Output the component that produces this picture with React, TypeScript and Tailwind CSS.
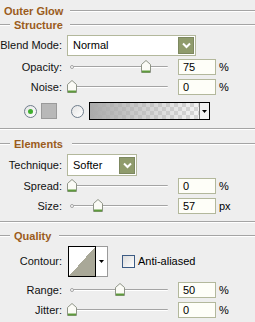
import React from "react"

const font = "font-['Liberation_Sans',Arial,sans-serif]"

const Thumb = ({ x }: { x: number }) => (
  <svg width="10" height="13" viewBox="0 0 10 13" className="absolute top-[-1px]" style={{ left: x }}>
    <path d="M0.5 4.5 L5 0.5 L9.5 4.5 L9.5 12.5 L0.5 12.5 Z" fill="#fbfbf6" stroke="#8e9486" />
    <path d="M1 11.5 L9 11.5" stroke="#5e9a3c" strokeWidth="2" />
  </svg>
)

const Slider = ({ pos }: { pos: number }) => (
  <div className="relative ml-[5px] h-[12px] w-[106px]">
    <div className="absolute left-[4px] top-[5px] h-[2px] w-[97px] rounded-full border-t border-[#a4a4a4] bg-white" />
    <div className="absolute left-[3px] top-[4px] h-[4px] w-[4px] rounded-full border border-[#a4a4a4] bg-white" />
    <Thumb x={pos - 67 - 5} />
  </div>
)

const Input = ({ value }: { value: string }) => (
  <div className="h-[16px] w-[38px] border border-[#b3b89c] bg-[#fefef8] pl-[4px] text-[11px] leading-[14px] text-black">{value}</div>
)

const SliderRow = ({ label, pos, value, unit, mt }: { label: string; pos: number; value: string; unit: string; mt: string }) => (
  <div className={`flex h-[16px] items-center ${mt}`}>
    <div className="w-[62px] text-right text-[11px] text-[#111]">{label}</div>
    <Slider pos={pos} />
    <div className="ml-[5px]"><Input value={value} /></div>
    <div className="ml-[3px] text-[11px] leading-[14px] text-black">{unit}</div>
  </div>
)

const Line = ({ w }: { w?: string }) => (
  <div className={`h-[2px] border-t border-[#a4a4a4] bg-white ${w ?? "flex-1"}`} />
)

const Heading = ({ title, left, gap, mt }: { title: string; left: boolean; gap: string; mt: string }) => (
  <div className={`flex h-[14px] items-center ${mt}`}>
    {left ? <Line w="w-[10px]" /> : <div className="w-[4px]" />}
    <div className={`${left ? "ml-[4px]" : ""} text-[11px] font-bold text-[#9b5c1c]`}>{title}</div>
    <div className={`flex-1 ${gap}`}><Line w="w-full" /></div>
  </div>
)

const Chevron = () => (
  <div className="flex h-[17px] w-[16px] items-center justify-center border border-[#7d8860] bg-[#8f9b6c]">
    <svg width="9" height="7" viewBox="0 0 9 7">
      <path d="M1 1.5 L4.5 5 L8 1.5" fill="none" stroke="#ffffff" strokeWidth="2" />
    </svg>
  </div>
)

const Select = ({ value, w, h, mt }: { value: string; w: string; h: string; mt: string }) => (
  <div className={`flex items-center ${mt}`}>
    <div className="w-[62px] text-right text-[11px] text-[#111]">{value === "Normal" ? "Blend Mode:" : "Technique:"}</div>
    <div className={`ml-[5px] flex items-center justify-between border border-[#b3b89c] bg-white pl-[5px] pr-[1px] ${w} ${h}`}>
      <span className="text-[11px] text-black">{value}</span>
      <Chevron />
    </div>
  </div>
)

const Radio = ({ on }: { on?: boolean }) => (
  <div className="flex h-[13px] w-[13px] items-center justify-center rounded-full border border-[#6f7d8c] bg-gradient-to-br from-[#e4e4e4] to-white">
    {on && <div className="h-[5px] w-[5px] rounded-full bg-[#3fae2e]" />}
  </div>
)

const Divider = ({ mt }: { mt: string }) => (
  <div className={`h-[2px] w-full border-t border-[#a4a4a4] bg-white ${mt}`} />
)

export default function App() {
  return (
    <div className={`h-[322px] w-[255px] overflow-hidden bg-[#eeeeee] pt-[4px] ${font}`}>
      <Heading title="Outer Glow" left={false} gap="ml-[7px]" mt="" />
      <Heading title="Structure" left={true} gap="ml-[7px]" mt="" />
      <Select value="Normal" w="w-[129px]" h="h-[21px]" mt="mt-[3px]" />
      <SliderRow label="Opacity:" pos={146} value="75" unit="%" mt="mt-[3px]" />
      <SliderRow label="Noise:" pos={72} value="0" unit="%" mt="mt-[4px]" />
      <div className="mt-[7px] flex h-[18px] items-center">
        <div className="ml-[24px]"><Radio on /></div>
        <div className="ml-[4px] h-[16px] w-[16px] border border-[#9a9a9a] bg-[#b8b8b8]" />
        <div className="ml-[14px]"><Radio /></div>
        <div className="ml-[5px] flex h-[18px] w-[121px] border border-black">
          <div className="flex-1 bg-[linear-gradient(to_right,#aaaaaa,rgba(175,175,175,0.45)_55%,rgba(200,200,200,0)),repeating-conic-gradient(#d6d6d6_0_25%,#f4f4f4_0_50%)] bg-[length:100%_100%,8px_8px]" />
          <div className="flex w-[10px] items-center justify-center border-l border-[#777] bg-[#f2f2f2]">
            <svg width="5" height="3" viewBox="0 0 5 3"><path d="M0 0 L5 0 L2.5 3 Z" fill="#000" /></svg>
          </div>
        </div>
      </div>
      <Divider mt="mt-[8px]" />
      <Heading title="Elements" left={true} gap="ml-[9px]" mt="mt-[7px]" />
      <Select value="Softer" w="w-[70px]" h="h-[22px]" mt="mt-[3px]" />
      <SliderRow label="Spread:" pos={72} value="0" unit="%" mt="mt-[2px]" />
      <SliderRow label="Size:" pos={98} value="57" unit="px" mt="mt-[4px]" />
      <Divider mt="mt-[7px]" />
      <Heading title="Quality" left={true} gap="ml-[8px]" mt="mt-[6px]" />
      <div className="mt-[3px] flex h-[31px] items-center">
        <div className="w-[62px] text-right text-[11px] text-[#111]">Contour:</div>
        <div className="ml-[6px] flex h-[31px] w-[40px]">
          <div className="h-full w-[28px] border border-black bg-[linear-gradient(to_bottom_right,#ffffff_50%,#a9a898_50%)]" />
          <div className="flex w-[12px] items-center justify-center border-y border-r border-[#9a9a9a] bg-white">
            <svg width="5" height="3" viewBox="0 0 5 3"><path d="M0 0 L5 0 L2.5 3 Z" fill="#000" /></svg>
          </div>
        </div>
        <div className="ml-[14px] h-[13px] w-[13px] border border-[#3c5b84] bg-gradient-to-br from-[#dcdcdc] to-white" />
        <div className="ml-[3px] text-[11px] text-black">Anti-aliased</div>
      </div>
      <SliderRow label="Range:" pos={120} value="50" unit="%" mt="mt-[5px]" />
      <SliderRow label="Jitter:" pos={72} value="0" unit="%" mt="mt-[4px]" />
    </div>
  )
}
